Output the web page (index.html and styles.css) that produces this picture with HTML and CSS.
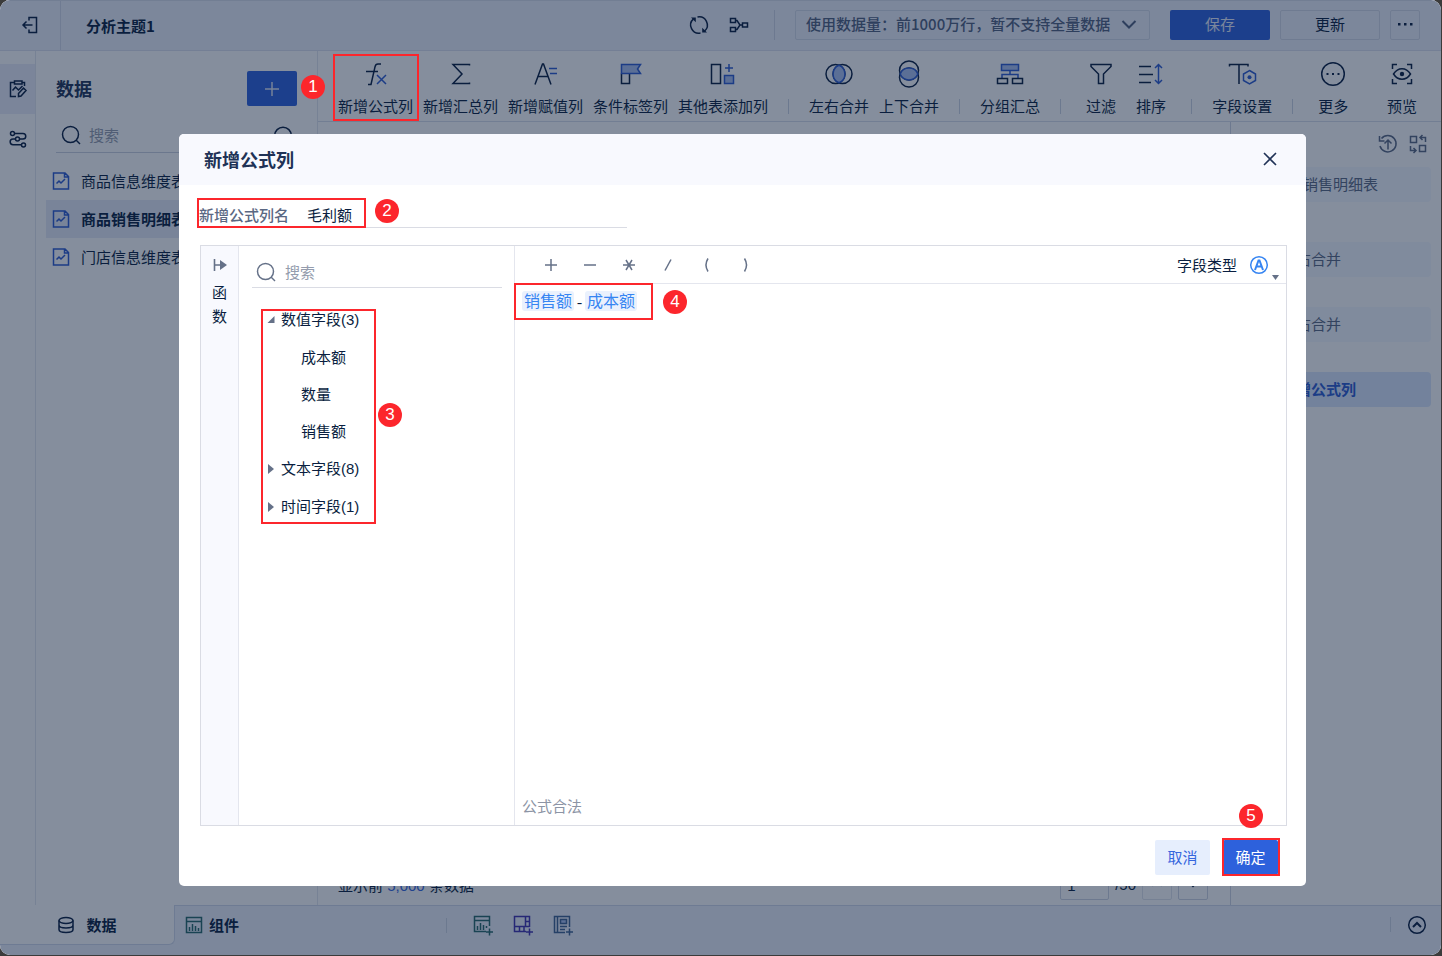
FILE: index.html
```html
<!DOCTYPE html>
<html lang="zh-CN">
<head>
<meta charset="utf-8">
<title>分析主题1</title>
<link rel="stylesheet" href="styles.css">
</head>
<body>
<div class="window">
<div class="app">
  <header class="topbar">
    <button class="exit" aria-label="退出"><svg class="i18" viewBox="0 0 18 18"><path d="M8 4.500v-3h7.500v15H8v-3M11.500 9H2M5.500 5.500 2 9l3.500 3.500"/></svg></button>
    <h1 class="topic">分析主题1</h1>
    <div class="top-actions">
      <button class="plain" aria-label="刷新"><svg class="i20" viewBox="0 0 20 20"><path d="M4.500 3.900A8.200 8.200 0 0 0 11.500 18.100M15.500 16.100A8.200 8.200 0 0 0 8.500 1.900"/><path class="solid" d="M2 2.500h4.800v4.800zM18 17.500h-4.800v-4.800z"/></svg></button>
      <button class="plain" aria-label="血缘"><svg class="i20" viewBox="0 0 20 20"><path d="M1.500 3.500h5v4h-5zM1.500 12.500h5v4h-5zM13.500 8h5v4h-5zM6.500 5.500h1.500l3 4.500-3 4.500H6.500M11 10h2.500"/></svg></button>
      <i class="bar-tall"></i>
      <button class="scope">使用数据量：前1000万行，暂不支持全量数据<svg class="i16" viewBox="0 0 16 16"><path class="w2" d="m1.500 5 6.500 6.500L14.500 5"/></svg></button>
      <button class="btn btn-save">保存</button>
      <button class="btn btn-line">更新</button>
      <button class="btn btn-line btn-dots" aria-label="更多操作"><svg class="i16" viewBox="0 0 16 16"><path class="solid" d="M1 7h2.500v2.500H1zM7 7h2.500v2.500H7zM13 7h2.500v2.500H13z"/></svg></button>
    </div>
  </header>

  <div class="main">
    <nav class="rail">
      <button class="rail-item rail-on" aria-label="编辑"><svg class="i18" viewBox="0 0 18 18"><path d="M13 2.500h2.500V6M5.500 2.500h-4v14H7M5.500 1h7.500v3H5.500zM3.500 10.500 6.500 7l3 3 4-4M9.500 13.500l5-5.500 2.500 2.500-5 5.500-2.500.500z"/></svg></button>
      <button class="rail-item" aria-label="流程"><svg class="i18" viewBox="0 0 18 18"><circle cx="3.500" cy="3.500" r="2"/><circle cx="8.500" cy="9" r="2"/><circle cx="14.500" cy="15" r="2"/><path d="M5.500 3.500h8.500a2.700 2.700 0 0 1 0 5.500h-3.500M6.500 9H4a2.800 2.800 0 0 0 0 5.700h8.500"/></svg></button>
    </nav>

    <aside class="side">
      <div class="side-head"><h2>数据</h2><button class="add" aria-label="添加"><svg class="i14" viewBox="0 0 14 14"><path d="M7 0v14M0 7h14"/></svg></button></div>
      <div class="side-search"><svg class="i20" viewBox="0 0 20 20"><circle cx="9.500" cy="9.500" r="8"/><path d="m15 15 4 4"/></svg><input aria-label="搜索数据" placeholder="搜索"><svg class="i18" viewBox="0 0 18 18"><circle cx="9" cy="9.500" r="8.300"/></svg></div>
      <ul class="tables">
        <li><svg class="i18 blue" viewBox="0 0 18 18"><path d="M1.500 1h11.500l3.500 3.500v12.500h-15zM12.500 1v4h4M4.500 11.500 7 9l2 2 4-4"/></svg>商品信息维度表</li>
        <li class="on"><svg class="i18 blue" viewBox="0 0 18 18"><path d="M1.500 1h11.500l3.500 3.500v12.500h-15zM12.500 1v4h4M4.500 11.500 7 9l2 2 4-4"/></svg>商品销售明细表</li>
        <li><svg class="i18 blue" viewBox="0 0 18 18"><path d="M1.500 1h11.500l3.500 3.500v12.500h-15zM12.500 1v4h4M4.500 11.500 7 9l2 2 4-4"/></svg>门店信息维度表</li>
      </ul>
    </aside>

    <section class="work">
      <div class="toolbar">
        <button class="tool"><svg class="i28" viewBox="0 0 28 28"><path d="M19 4h-3c-1.800 0-2.600.8-3 2.800L9 24.500H6M4 11.500h12"/><path class="blue" d="m15 15 9 9M24 15l-9 9"/></svg>新增公式列</button>
        <button class="tool"><svg class="i28" viewBox="0 0 28 28"><path d="M22.500 5.500v-1H6l9 9.500-9 9.500h16.500v-1"/></svg>新增汇总列</button>
        <button class="tool"><svg class="i28" viewBox="0 0 28 28"><path d="M3 24.500 10.500 4h1L19 24.500M6 16.500h10"/><path class="blue" d="M17 8.500h8M18 13.500h7"/></svg>新增赋值列</button>
        <button class="tool"><svg class="i28" viewBox="0 0 28 28"><path d="M4.500 13.500v10h8v-10"/><path class="blue tint" d="M4.500 4.500h19l-3 4.500 3 4.500h-19z"/></svg>条件标签列</button>
        <button class="tool"><svg class="i28" viewBox="0 0 28 28"><path d="M2.500 4.500h9v19h-9z"/><path class="blue" d="M20 4v8M16 8h8"/><path class="blue tint" d="M15.500 15.500h9v8h-9z"/></svg>其他表添加列</button>
        <i class="bar"></i>
        <button class="tool"><svg class="i28" viewBox="0 0 28 28"><circle cx="10.500" cy="14" r="9.500"/><circle cx="17.500" cy="14" r="9.500"/><path class="blue tint" d="M14 5.200a9.500 9.500 0 0 1 0 17.600 9.500 9.500 0 0 1 0-17.600z"/></svg>左右合并</button>
        <button class="tool"><svg class="i28" viewBox="0 0 28 28"><circle cx="14" cy="10.500" r="9.500"/><circle cx="14" cy="17.500" r="9.500"/><path class="blue tint" d="M5.200 14a9.500 9.500 0 0 1 17.600 0 9.500 9.500 0 0 1-17.600 0z"/></svg>上下合并</button>
        <i class="bar"></i>
        <button class="tool"><svg class="i28" viewBox="0 0 28 28"><path class="blue tint" d="M5.500 4.500h17v6h-17z"/><path class="blue" d="M14 10.500v4M6 18v-3.500h16V18"/><path d="M1.500 18.500h10v5h-10zM16.500 18.500h10v5h-10z"/></svg>分组汇总</button>
        <i class="bar"></i>
        <button class="tool"><svg class="i28" viewBox="0 0 28 28"><path d="M4 4.500h20v2L16.500 14v9.500h-5V14L4 6.500z"/></svg>过滤</button>
        <button class="tool"><svg class="i28" viewBox="0 0 28 28"><path d="M2 6.500h12M2 14.500h14M2 22.500h12"/><path class="blue" d="M21.500 5v18M18 8l3.500-3.500L25 8M18 20l3.500 3.500L25 20"/></svg>排序</button>
        <i class="bar"></i>
        <button class="tool"><svg class="i28" viewBox="0 0 28 28"><path d="M1.500 6.500v-2H20v2M11 4.500V24"/><path class="blue" d="m21.500 10.500 6 3.500v6.500l-6 3.500-6-3.500V14z"/><circle class="bluefill" cx="21.500" cy="17.200" r="2"/></svg>字段设置</button>
        <i class="bar"></i>
        <button class="tool"><svg class="i28" viewBox="0 0 28 28"><circle cx="14" cy="14" r="11.300"/><path class="solid" d="M7.500 13h2v2h-2zM13 13h2v2h-2zM18.500 13h2v2h-2z"/></svg>更多</button>
        <button class="tool tool-end"><svg class="i28" viewBox="0 0 28 28"><path d="M4.500 9V4.500H9M19 4.500h4.500V9M23.500 19v4.500H19M9 23.500H4.500V19M5.500 14c4.500-7 12.500-7 17 0-4.500 7-12.500 7-17 0z"/><circle class="solid" cx="14" cy="14" r="2.200"/></svg>预览</button>
      </div>
      <div class="work-body">
        <div class="grid-area">
          <p>显示前 <b>5,000</b> 条数据</p>
          <div class="pager"><input aria-label="页码" value="1"><span>/50</span><button class="pg pg-off" aria-label="上一页"><svg class="i16" viewBox="0 0 16 16"><path class="w2" d="m3 9 5-5 5 5"/></svg></button><button class="pg" aria-label="下一页"><svg class="i16" viewBox="0 0 16 16"><path class="w2" d="m3 4 5 5 5-5"/></svg></button></div>
        </div>
        <aside class="steps">
          <div class="steps-head">
            <button class="plain" aria-label="还原"><svg class="i20" viewBox="0 0 20 20"><path d="M3.500 4.500a8.200 8.200 0 1 1-1.500 7.500M1.500 2v5h5M10 15.500V6M6.500 9.500 10 6l3.500 3.500"/></svg></button>
            <button class="plain" aria-label="切换"><svg class="i20" viewBox="0 0 20 20"><path d="M2.500 2.500h6v6h-6zM11.500 11.500h6v6h-6zM17.500 8V3.500h-5M14.500 1l-2.500 2.500L14.500 6M2.500 12v4.500h5M5.500 14 8 16.500 5.500 19"/></svg></button>
          </div>
          <div class="step step-source">商品销售明细表</div>
          <div class="step">左右合并</div>
          <div class="step">左右合并</div>
          <div class="step step-on">新增公式列</div>
        </aside>
      </div>
    </section>
  </div>

  <footer class="tabs">
    <button class="tab tab-on"><svg class="i18" viewBox="0 0 18 18"><ellipse cx="9" cy="4.500" rx="7" ry="3"/><path d="M2 4.500v9c0 1.700 3 3 7 3s7-1.300 7-3v-9M2 9c0 1.700 3 3 7 3s7-1.300 7-3"/></svg>数据</button>
    <button class="tab"><svg class="i18 green" viewBox="0 0 18 18"><path d="M1.500 1.500h15v15h-15zM1.500 5.500h15M4.500 15v-4M7.500 15V8M10.500 15v-5M13.500 15v-3"/></svg>组件</button>
    <div class="new">
      <i class="bar"></i>
      <button class="plain" aria-label="新建组件"><svg class="i20 green" viewBox="0 0 20 20"><path d="M13 16.500H1.500v-15h15V11M1.500 5.500h15M4.500 15v-4M7.500 15V8M10.500 15v-5M13.500 13v-2M13 17h7M16.500 13.500v7"/></svg></button>
      <button class="plain" aria-label="新建仪表板"><svg class="i20 violet" viewBox="0 0 20 20"><path d="M13 16.500H1.500v-15h15V12M1.500 11.500h15M12.500 1.500v10M12.500 6.500h4M6.500 11.500v5M11 11.500v5M13 17h7M16.500 13.500v7"/></svg></button>
      <button class="plain" aria-label="新建文档"><svg class="i20 steel" viewBox="0 0 20 20"><path d="M12 17.500H1.500v-16h15V12M4.500 1.500v16M7 11.500h7M7 14.500h5M13 17h7M16.500 13.500v7"/><path class="tint" d="M7.500 4.500h6v4h-6z"/></svg></button>
    </div>
    <div class="fold"><i class="bar"></i><button class="plain" aria-label="展开"><svg class="i20" viewBox="0 0 20 20"><circle cx="10" cy="10" r="8.300"/><path class="w2" d="m6 12 4-4 4 4"/></svg></button></div>
  </footer>
</div>

<div class="scrim">
  <span class="mark mark-tool"><i class="pin">1</i></span>
  <div class="dialog" role="dialog" aria-labelledby="dialog-title">
    <div class="dialog-head"><h2 id="dialog-title">新增公式列</h2><button class="plain" aria-label="关闭"><svg class="i14" viewBox="0 0 14 14"><path class="w15" d="m1 1 12 12M13 1 1 13"/></svg></button></div>
    <div class="name-row"><label for="colname">新增公式列名</label><input id="colname" value="毛利额"><span class="mark mark-name"><i class="pin">2</i></span></div>
    <div class="editor">
      <button class="functions"><svg class="i14" viewBox="0 0 14 14"><path class="w15" d="M1.500 1v12M2 7h6"/><path class="solid" d="M7 2 14 7l-7 5z"/></svg><span>函</span><span>数</span></button>
      <div class="fields">
        <div class="field-search"><svg class="i20" viewBox="0 0 20 20"><circle cx="9.500" cy="9.500" r="8"/><path d="m15 15 4 4"/></svg><input aria-label="搜索字段" placeholder="搜索"></div>
        <ul class="tree">
          <li class="group"><svg class="i8" viewBox="0 0 8 8"><path class="solid" d="M7.500 0v7H.5z"/></svg>数值字段(3)</li>
          <li class="leaf">成本额</li>
          <li class="leaf">数量</li>
          <li class="leaf">销售额</li>
          <li class="group"><svg class="i8" viewBox="0 0 8 8"><path class="solid" d="M1-1l6 5-6 5z"/></svg>文本字段(8)</li>
          <li class="group"><svg class="i8" viewBox="0 0 8 8"><path class="solid" d="M1-1l6 5-6 5z"/></svg>时间字段(1)</li>
          <li class="mark mark-tree"><i class="pin">3</i></li>
        </ul>
      </div>
      <div class="formula">
        <div class="ops">
          <button aria-label="加"><svg class="i14" viewBox="0 0 14 14"><path d="M7 1v12M1 7h12"/></svg></button>
          <button aria-label="减"><svg class="i14" viewBox="0 0 14 14"><path d="M1 7h12"/></svg></button>
          <button aria-label="乘"><svg class="i14" viewBox="0 0 14 14"><path d="M1 7h12M4 2l6 10M10 2 4 12"/></svg></button>
          <button aria-label="除"><svg class="i14" viewBox="0 0 14 14"><path d="M10 1.500 4 12.500"/></svg></button>
          <button aria-label="左括号"><svg class="i14" viewBox="0 0 14 14"><path d="M8 .5c-2.500 4-2.500 9 0 13"/></svg></button>
          <button aria-label="右括号"><svg class="i14" viewBox="0 0 14 14"><path d="M5.500.5c2.500 4 2.500 9 0 13"/></svg></button>
          <button class="type">字段类型<svg class="i20 sky" viewBox="0 0 20 20"><circle cx="10" cy="10" r="8.300"/><path class="w2" d="M6 15 9.500 5.500h1L14 15M7.300 11.500h5.400"/></svg><svg class="i8 caret" viewBox="0 0 8 8"><path class="solid" d="M1 2h7L4.500 7z"/></svg></button>
        </div>
        <div class="expr"><span class="tag">销售额</span><span class="minus">-</span><span class="tag">成本额</span><span class="mark mark-expr"><i class="pin">4</i></span></div>
        <p class="valid">公式合法</p>
      </div>
    </div>
    <div class="dialog-foot"><button class="cancel">取消</button><button class="ok">确定<span class="mark mark-ok"><i class="pin">5</i></span></button></div>
  </div>
</div>
</div>
</body>
</html>
```

FILE: styles.css
```css
* { box-sizing: border-box; }
body {
  margin: 0;
  background: #3b3b3b;
  color: #091e40;
  font: 15px/20px "Noto Sans CJK SC", sans-serif;
}
h1, h2, p, ul { margin: 0; padding: 0; font-size: 15px; }
ul { list-style: none; }
button, input { font: inherit; color: inherit; background: none; border: 0; padding: 0; margin: 0; min-width: 0; outline: 0; }
button { cursor: pointer; white-space: nowrap; display: flex; align-items: center; justify-content: center; flex: none; }
input::placeholder { color: #949cad; opacity: 1; }
svg { fill: none; stroke: currentColor; stroke-width: 1.5; flex: none; display: block; overflow: visible; }
.w15 { stroke-width: 1.6; }
.w2 { stroke-width: 2; }
.solid { fill: currentColor; stroke: none; }
.blue { stroke: #2c5bd0; }
.tint { fill: #aac0f0; }
.bluefill { fill: #2c5bd0; stroke: none; }
.green { color: #26696b; }
.violet { color: #4033b0; }
.steel { color: #3e6393; }
.sky { color: #3685f2; }
.i8 { width: 8px; height: 8px; }
.i14 { width: 14px; height: 14px; }
.i16 { width: 16px; height: 16px; }
.i18 { width: 18px; height: 18px; }
.i20 { width: 20px; height: 20px; }
.i28 { width: 28px; height: 28px; }

.window { position: relative; height: 100vh; min-height: 600px; padding: 0 1px 1px 0; overflow: hidden; }
.app { height: 100%; display: flex; flex-direction: column; background: #fff; border-radius: 10px; overflow: hidden; }

.topbar { display: flex; align-items: center; height: 51px; flex: none; padding-bottom: 1px; background: #edf0fa; border-top: 1px solid #d9deea; border-bottom: 1px solid #dce1ee; }
.exit { width: 61px; height: 49px; border-right: 1px solid #d2d8e8; }
.topic { padding: 2px 0 0 25px; }
.top-actions { margin-left: auto; display: flex; align-items: center; padding-right: 21px; }
.top-actions .plain { margin-right: 20px; }
.bar-tall { width: 1px; height: 30px; margin: 0 20px 0 5px; background: #ced5e4; }
.scope { width: 355px; height: 30px; padding: 0 12px 2px 10px; justify-content: space-between; border: 1px solid #d3dae8; border-radius: 2px; color: #50617f; font-weight: 500; }
.btn { width: 100px; height: 30px; margin-left: 20px; padding-bottom: 2px; border-radius: 2px; }
.btn-save { background: #2d61dc; color: #e8eefc; }
.btn-line { border: 1px solid #d3d9e6; margin-left: 10px; }
.btn-dots { width: 30px; }

.main { flex: 1; min-height: 0; display: flex; }
.rail { width: 36px; flex: none; border-right: 1px solid #e3e6ee; padding-top: 13px; }
.rail-item { width: 35px; height: 50px; }
.rail-on { background: #eaedf8; }

.side { width: 282px; flex: none; border-right: 1px solid #e3e6ee; }
.side-head { display: flex; align-items: center; justify-content: space-between; padding: 20px 20px 0; height: 55px; }
.side-head h2 { font-size: 18px; line-height: 24px; padding-bottom: 2px; color: #203256; }
.add { width: 50px; height: 35px; border-radius: 2px; background: #2d61dc; color: #e0e6f4; }
.side-search { display: flex; align-items: center; gap: 8px; margin: 12px 20px 9px; padding: 0 5px; height: 35px; border-bottom: 1px solid #cbd1df; }
.side-search input { flex: 1; padding-bottom: 1px; }
.tables { padding: 0 10px; }
.tables li { height: 38px; display: flex; align-items: center; gap: 11px; padding-left: 6px; }
.tables .on { background: #e7ebf7; font-weight: 700; }

.work { flex: 1; min-width: 0; display: flex; flex-direction: column; }
.toolbar { height: 71px; flex: none; display: flex; align-items: stretch; padding: 9px 14px 4px 15px; border-bottom: 1px solid #d9deea; }
.tool { flex-direction: column; justify-content: flex-start; gap: 8px; padding: 0 5px; min-width: 50px; }
.tool-end { margin-left: auto; }
.bar { width: 1px; height: 15px; flex: none; background: #cdd4e2; }
.toolbar .bar { margin: 39px 15px 0; }
.work-body { flex: 1; min-height: 0; display: flex; }
.grid-area { flex: 1; display: flex; align-items: flex-end; justify-content: space-between; padding: 0 22px 5px 20px; }
.grid-area p { padding-bottom: 4px; font-family: "Liberation Sans", "Noto Sans CJK SC", sans-serif; }
.grid-area b { font-weight: 400; color: #3566de; }
.pager { display: flex; align-items: center; font-family: "Liberation Sans", sans-serif; }
.pager input { width: 49px; height: 30px; padding-left: 6px; border: 1px solid #ced5e2; border-radius: 2px; }
.pager span { margin: 0 6px; }
.pg { width: 30px; height: 30px; border: 1px solid #ced5e2; border-radius: 2px; }
.pg + .pg { margin-left: 6px; }
.pg-off { color: #d2d8e3; border-color: #e1e5ed; }
.steps { width: 211px; flex: none; border-left: 1px solid #cfd5e2; padding: 12px 10px; color: #5a6883; }
.steps-head { display: flex; justify-content: flex-end; gap: 10px; padding-right: 3px; margin-bottom: 13px; }
.step { height: 35px; display: flex; align-items: center; padding: 0 0 2px 40px; margin-bottom: 30px; border-radius: 4px; background: #f4f8fe; }
.step-source { padding-left: 32px; margin-bottom: 40px; }
.step-on { background: #dbe7fd; color: #2c5bd0; font-weight: 700; }

.tabs { height: 50px; flex: none; display: flex; align-items: flex-start; background: #edf0fa; }
.tab { height: 40px; gap: 6px; padding: 0 0 2px 10px; font-weight: 700; border-top: 1px solid #d0d9ea; }
.tab-on { width: 175px; gap: 11px; padding: 0; background: #fff; border: solid #d0d9ea; border-width: 0 1px 1px 0; border-radius: 0 0 6px 0; }
.new { flex: 1; height: 40px; display: flex; align-items: center; gap: 20px; padding: 0 0 1px 207px; border-top: 1px solid #d0d9ea; }
.new .bar { margin-right: 6px; }
.fold { height: 40px; display: flex; align-items: center; gap: 16px; padding: 0 14px 2px 0; border-top: 1px solid #d0d9ea; }

.scrim {
  position: absolute; inset: 0 1px 1px 0;
  display: flex;
  padding: 134px 135px 69px 179px;
  border-radius: 10px;
  background: rgba(11, 30, 60, .5);
}
.dialog { flex: 1; min-width: 0; display: flex; flex-direction: column; background: #fff; border-radius: 5px; }
.dialog-head { display: flex; align-items: center; justify-content: space-between; height: 51px; flex: none; padding: 0 29px 1px 25px; background: #f8f9fe; border-radius: 5px 5px 0 0; }
.dialog-head h2 { font-size: 18px; line-height: 24px; padding-bottom: 1px; color: #203256; }
.dialog-head .plain { color: #203256; }
.name-row { position: relative; display: flex; width: 428px; height: 43px; margin: 0 0 17px 20px; padding-top: 18px; }
.name-row label { width: 98px; flex: none; font-weight: 500; line-height: 24px; color: #5a6883; }
.name-row input { flex: 1; padding-left: 10px; border-bottom: 1px solid #dadce4; }
.editor { flex: 1; min-height: 0; display: flex; margin: 0 19px 0 21px; border: 1px solid #dadce4; }
.functions { width: 38px; flex-direction: column; justify-content: flex-start; padding-top: 12px; background: #f8f9fe; border-right: 1px solid #e4e6ee; }
.functions svg { color: #657188; margin-bottom: 10px; }
.functions span { height: 24px; }
.fields { width: 276px; flex: none; border-right: 1px solid #e4e6ee; padding: 11px 12px 0 13px; }
.field-search { display: flex; align-items: center; gap: 9px; height: 31px; padding: 0 0 1px 4px; border-bottom: 1px solid #dadce4; color: #657188; }
.tree { position: relative; padding: 13px 0 0 15px; font-family: "Liberation Sans", "Noto Sans CJK SC", sans-serif; }
.group { height: 38px; display: flex; align-items: center; gap: 6px; }
.group svg { color: #657188; }
.leaf { height: 37px; line-height: 37px; padding-left: 34px; }
.formula { flex: 1; min-width: 0; display: flex; flex-direction: column; }
.ops { display: flex; height: 38px; flex: none; padding: 0 7px 0 16px; border-bottom: 1px solid #e4e6ee; }
.ops button { width: 39px; color: #657188; }
.ops .type { width: auto; margin-left: auto; gap: 12px; color: #091e40; }
.ops .caret { color: #657188; align-self: flex-end; margin: 0 0 2px -10px; }
.expr { position: relative; display: flex; align-items: center; padding: 7px 0 0 7px; font-size: 16px; }
.expr .tag { padding: 0 2px 1px; line-height: 19px; border-radius: 3px; background: #eaf1fd; color: #3685f2; }
.minus { width: 11px; text-align: center; }
.valid { margin-top: auto; padding: 0 0 9px 7px; color: #8c94a5; }
.dialog-foot { display: flex; justify-content: flex-end; gap: 13px; padding: 14px 28px 11px 0; }
.cancel, .ok { height: 35px; width: 55px; padding-bottom: 2px; border-radius: 2px; }
.cancel { background: #e6eefd; color: #3566de; }
.ok { position: relative; background: #2d61dc; color: #fff; }

.mark { position: absolute; border: 2px solid #fc262c; pointer-events: none; }
.pin {
  position: absolute; width: 24px; height: 24px; border-radius: 50%;
  background: #fc262c; color: #fff; text-align: center;
  font: 400 17px/24px "Liberation Sans", sans-serif;
}
.mark-tool { left: 333px; top: 54px; width: 86px; height: 67px; }
.mark-tool .pin { left: -34px; top: 19px; }
.mark-name { left: -2px; top: 13px; width: 169px; height: 30px; }
.mark-name .pin { left: 176px; top: -1px; }
.mark-tree { left: 9px; top: 21px; width: 115px; height: 215px; }
.mark-tree .pin { left: 115px; top: 92px; }
.mark-expr { left: -1px; top: -1px; width: 139px; height: 37px; }
.mark-expr .pin { left: 147px; top: 5px; }
.mark-ok { inset: -2px -2px -1px -1px; }
.mark-ok .pin { left: 15px; top: -36px; }
```
